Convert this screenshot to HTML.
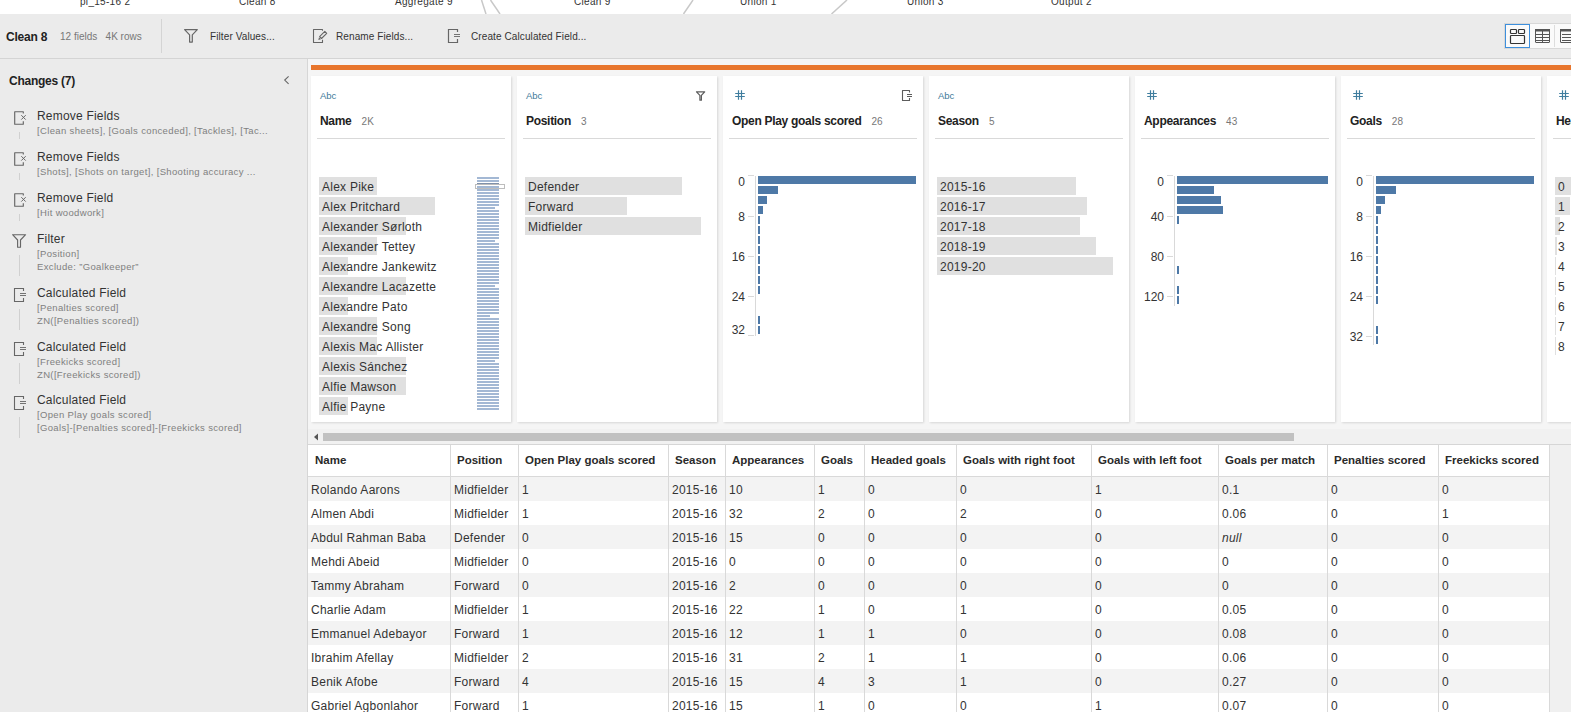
<!DOCTYPE html>
<html><head><meta charset="utf-8">
<style>
*{box-sizing:border-box;margin:0;padding:0}
html,body{width:1571px;height:712px;overflow:hidden;background:#f5f5f5;font-family:"Liberation Sans",sans-serif;color:#333}
.abs{position:absolute}
.t{position:absolute;white-space:nowrap;line-height:1}
#top{left:0;top:0;width:1571px;height:14px;background:#fff;overflow:hidden}
#top .t{font-size:10px;letter-spacing:0.3px;color:#333;top:-3px}
#tb{left:0;top:14px;width:1571px;height:45px;background:#ebebeb;border-bottom:1px solid #d4d4d4}
#left{left:0;top:59px;width:308px;height:653px;background:#ebebeb;border-right:1px solid #d6d6d6}
#right{left:308px;top:59px;width:1263px;height:653px;background:#f5f5f5}
#orange{left:311px;top:65px;width:1260px;height:5px;background:#e8762d}
.card{position:absolute;top:76px;width:200px;height:346px;background:#fff;box-shadow:1px 1px 2px rgba(0,0,0,.12)}
.card .typ{position:absolute;left:9px;top:14.5px;font-size:9.5px;color:#3f7a9a;line-height:1}
.card .nm{position:absolute;left:9px;top:39px;font-size:12px;letter-spacing:-0.3px;font-weight:bold;color:#222;line-height:1;white-space:nowrap}
.card .nm span{font-weight:normal;font-size:10px;letter-spacing:0.1px;color:#777;margin-left:10px}
.card .hl{position:absolute;left:6px;top:62px;width:188px;height:1px;background:#d9d9d9}
.bar{position:absolute;height:18px;background:#e0e0e0}
.bt{position:absolute;font-size:12px;letter-spacing:0.25px;color:#333;line-height:1;white-space:nowrap}
.hb{position:absolute;height:8px;background:#4e79a7}
.ax{position:absolute;width:1px;background:#d9d9d9}
.tk{position:absolute;width:6px;height:1px;background:#d9d9d9}
.al{position:absolute;font-size:12px;color:#333;line-height:1;text-align:right;width:30px}
.ch .ti{position:absolute;left:37px;font-size:12px;letter-spacing:0.2px;color:#333;line-height:1;white-space:nowrap}
.ch .su{position:absolute;left:37px;font-size:9.5px;letter-spacing:0.35px;color:#808080;line-height:1;white-space:nowrap}
#tbl{left:308px;top:445px;width:1263px;height:267px;background:#f0f0f0}
table{border-collapse:collapse;position:absolute;left:0;top:0;table-layout:fixed}
th{height:32px;background:#fff;font-size:11.5px;font-weight:bold;text-align:left;padding:0 0 0 6px;border:1px solid #d9d9d9;color:#222;white-space:nowrap}
td{height:24px;font-size:12px;padding:0 0 0 3px;border-left:1px solid #d9d9d9;border-right:1px solid #d9d9d9;color:#333;white-space:nowrap}
tr.g td{background:#f3f3f3}
tr.w td{background:#fff}
.th{position:absolute;top:455px;font-size:11.5px;font-weight:bold;color:#2a2a2a;line-height:1;white-space:nowrap}
.td{position:absolute;font-size:12px;letter-spacing:0.25px;color:#333;line-height:1;white-space:nowrap}
</style></head><body>
<div id="top" class="abs">
  <span class="t" style="left:80px">pl_15-16 2</span>
  <span class="t" style="left:239px">Clean 8</span>
  <span class="t" style="left:395px">Aggregate 9</span>
  <span class="t" style="left:574px">Clean 9</span>
  <span class="t" style="left:740px">Union 1</span>
  <span class="t" style="left:907px">Union 3</span>
  <span class="t" style="left:1051px">Output 2</span>
  <svg class="abs" style="left:0;top:0" width="1571" height="14"><g stroke="#c8c8c8" stroke-width="1.5" fill="none">
    <line x1="481.5" y1="0" x2="486" y2="14"/><line x1="490.5" y1="0" x2="500" y2="14"/>
    <line x1="693" y1="0" x2="683.5" y2="14"/><line x1="847" y1="0" x2="831.5" y2="14"/></g></svg>
</div>
<div id="tb" class="abs">
  <span class="t" style="left:6px;top:17px;font-size:12px;letter-spacing:-0.2px;font-weight:bold;color:#222">Clean 8</span>
  <span class="t" style="left:60px;top:18px;font-size:10px;color:#777">12 fields&nbsp;&nbsp; 4K rows</span>
  <div class="abs" style="left:161px;top:5px;width:1px;height:34px;background:#d4d4d4"></div>
  <svg class="abs" style="left:183px;top:14px" width="17" height="16" viewBox="0 0 17 16"><path d="M1.6 1.7 H14.3 L9.3 6.8 V14.1 H6.6 V6.8 Z" fill="none" stroke="#666" stroke-width="1.2" stroke-linejoin="round"/></svg>
  <span class="t" style="left:210px;top:18px;font-size:10px;letter-spacing:0.1px;color:#333">Filter Values...</span>
  <svg class="abs" style="left:312px;top:14px" width="17" height="16" viewBox="0 0 17 16"><path d="M10.5 2.8 V1.5 H1.5 V14.5 H10.5 V11.8" fill="none" stroke="#666" stroke-width="1.1" stroke-linejoin="round"/><path d="M7.6 8.6 L12.8 3.4 L14.7 5.3 L9.5 10.5 Z" fill="none" stroke="#666" stroke-width="1.1" stroke-linejoin="round"/><path d="M6.3 12 L7 9.3 L9 11.3 Z" fill="#666"/></svg>
  <span class="t" style="left:336px;top:18px;font-size:10px;letter-spacing:0.1px;color:#333">Rename Fields...</span>
  <svg class="abs" style="left:447px;top:14px" width="16" height="16" viewBox="0 0 16 16"><path d="M10.5 4 V1.5 H1.5 V14.5 H10.5 V11" fill="none" stroke="#666" stroke-width="1.2"/><path d="M7 6.5 H13 M7 8.5 H13" stroke="#666" stroke-width="0.9"/></svg>
  <span class="t" style="left:471px;top:18px;font-size:10px;letter-spacing:0.1px;color:#333">Create Calculated Field...</span>
  <div class="abs" style="left:1504px;top:9px;width:70px;height:26px;background:#fafafa;border:1px solid #d8d8d8"></div>
  <div class="abs" style="left:1505px;top:10px;width:25px;height:24px;border:1.5px solid #3d8fdc;background:#fafafa"></div>
  <svg class="abs" style="left:1505px;top:10px" width="66" height="24" viewBox="0 0 66 24">
    <g fill="none" stroke="#333" stroke-width="1.2">
      <rect x="5.5" y="5.5" width="6" height="4" rx="0.8"/><rect x="13.5" y="5.5" width="6" height="4" rx="0.8"/><rect x="5.5" y="11.5" width="14" height="8" rx="0.8"/>
    </g>
    <g fill="none" stroke="#555" stroke-width="1">
      <rect x="30.5" y="5.5" width="14" height="13" rx="0.5"/><path d="M37.5 6 V18.5 M31 10.5 H44 M31 13.5 H44 M31 16.5 H44"/>
    </g>
    <rect x="30" y="5" width="15" height="2.5" fill="#555"/>
    <line x1="49.5" y1="1" x2="49.5" y2="23" stroke="#ddd"/>
    <g fill="none" stroke="#555" stroke-width="1"><rect x="55.5" y="5.5" width="14" height="13" rx="0.5"/><path d="M57 10.5 H70 M57 13.5 H70 M57 16.5 H70"/></g>
    <rect x="55" y="5" width="15" height="2.5" fill="#555"/>
  </svg>
</div>
<div id="left" class="abs"></div>
<div class="ch">
<span class="t" style="left:9px;top:75px;font-size:12px;letter-spacing:-0.25px;font-weight:bold;color:#222">Changes (7)</span>
<svg class="abs" style="left:282px;top:74px" width="10" height="12" viewBox="0 0 10 12"><path d="M6.6 2.3 L2.7 6.1 L6.6 9.9" fill="none" stroke="#666" stroke-width="1.1"/></svg>
<svg class="abs" style="left:13px;top:110px" width="16" height="16" viewBox="0 0 16 16"><path d="M10.3 3.5 V1.7 H1.7 V14.2 H10.3 V11.2" fill="none" stroke="#666" stroke-width="1.15" stroke-linejoin="round"/><path d="M8.3 5.2 L12.7 9.6 M12.7 5.2 L8.3 9.6" stroke="#666" stroke-width="1"/></svg>
<span class="ti" style="top:110px">Remove Fields</span>
<span class="su" style="top:126px">[Clean sheets], [Goals conceded], [Tackles], [Tac...</span>
<div class="abs" style="left:19px;top:132px;width:1px;height:7px;background:#d0d0d0"></div>
<svg class="abs" style="left:13px;top:151px" width="16" height="16" viewBox="0 0 16 16"><path d="M10.3 3.5 V1.7 H1.7 V14.2 H10.3 V11.2" fill="none" stroke="#666" stroke-width="1.15" stroke-linejoin="round"/><path d="M8.3 5.2 L12.7 9.6 M12.7 5.2 L8.3 9.6" stroke="#666" stroke-width="1"/></svg>
<span class="ti" style="top:151px">Remove Fields</span>
<span class="su" style="top:167px">[Shots], [Shots on target], [Shooting accuracy ...</span>
<div class="abs" style="left:19px;top:173px;width:1px;height:7px;background:#d0d0d0"></div>
<svg class="abs" style="left:13px;top:192px" width="16" height="16" viewBox="0 0 16 16"><path d="M10.3 3.5 V1.7 H1.7 V14.2 H10.3 V11.2" fill="none" stroke="#666" stroke-width="1.15" stroke-linejoin="round"/><path d="M8.3 5.2 L12.7 9.6 M12.7 5.2 L8.3 9.6" stroke="#666" stroke-width="1"/></svg>
<span class="ti" style="top:192px">Remove Field</span>
<span class="su" style="top:208px">[Hit woodwork]</span>
<div class="abs" style="left:19px;top:214px;width:1px;height:7px;background:#d0d0d0"></div>
<svg class="abs" style="left:11px;top:233px" width="17" height="16" viewBox="0 0 17 16"><path d="M1.6 1.7 H14.6 L9.5 7 V14.2 H6.6 V7 Z" fill="none" stroke="#666" stroke-width="1.15" stroke-linejoin="round"/></svg>
<span class="ti" style="top:233px">Filter</span>
<span class="su" style="top:249px">[Position]</span>
<span class="su" style="top:262px">Exclude: ”Goalkeeper”</span>
<div class="abs" style="left:19px;top:255px;width:1px;height:21px;background:#d0d0d0"></div>
<svg class="abs" style="left:13px;top:287px" width="16" height="16" viewBox="0 0 16 16"><path d="M10.5 4 V1.5 H1.5 V14.5 H10.5 V11" fill="none" stroke="#666" stroke-width="1.1"/><path d="M7 6.5 H13 M7 8.5 H13" stroke="#666" stroke-width="0.9"/></svg>
<span class="ti" style="top:287px">Calculated Field</span>
<span class="su" style="top:303px">[Penalties scored]</span>
<span class="su" style="top:316px">ZN([Penalties scored])</span>
<div class="abs" style="left:19px;top:309px;width:1px;height:21px;background:#d0d0d0"></div>
<svg class="abs" style="left:13px;top:341px" width="16" height="16" viewBox="0 0 16 16"><path d="M10.5 4 V1.5 H1.5 V14.5 H10.5 V11" fill="none" stroke="#666" stroke-width="1.1"/><path d="M7 6.5 H13 M7 8.5 H13" stroke="#666" stroke-width="0.9"/></svg>
<span class="ti" style="top:341px">Calculated Field</span>
<span class="su" style="top:357px">[Freekicks scored]</span>
<span class="su" style="top:370px">ZN([Freekicks scored])</span>
<div class="abs" style="left:19px;top:363px;width:1px;height:21px;background:#d0d0d0"></div>
<svg class="abs" style="left:13px;top:395px" width="16" height="16" viewBox="0 0 16 16"><path d="M10.5 4 V1.5 H1.5 V14.5 H10.5 V11" fill="none" stroke="#666" stroke-width="1.1"/><path d="M7 6.5 H13 M7 8.5 H13" stroke="#666" stroke-width="0.9"/></svg>
<span class="ti" style="top:394px">Calculated Field</span>
<span class="su" style="top:410px">[Open Play goals scored]</span>
<span class="su" style="top:423px">[Goals]-[Penalties scored]-[Freekicks scored]</span>
<div class="abs" style="left:19px;top:417px;width:1px;height:21px;background:#d0d0d0"></div>
</div>
<div id="right" class="abs"></div>
<div id="orange" class="abs"></div>
<!--CARDS-->
<div class="card" style="left:311px">
<span class="typ">Abc</span>
<span class="nm">Name<span>2K</span></span>
<div class="hl"></div>

</div>
<div class="card" style="left:517px">
<span class="typ">Abc</span>
<span class="nm">Position<span>3</span></span>
<div class="hl"></div>
<svg class="abs" style="left:178px;top:14px" width="12" height="12" viewBox="0 0 12 12"><path d="M1.5 1.8 H9.7 L6.4 5.4 V10.2 H4.9 V5.4 Z" fill="none" stroke="#5c5c5c" stroke-width="1.2" stroke-linejoin="round"/></svg>
</div>
<div class="card" style="left:723px">
<svg class="abs" style="left:11px;top:13px" width="12" height="12" viewBox="0 0 12 12"><path d="M4.5 1.2 V10.8 M7.5 1.2 V10.8 M1.2 4.5 H10.8 M1.2 7.5 H10.8" stroke="#3f7d9e" stroke-width="1.2"/></svg>
<span class="nm">Open Play goals scored<span>26</span></span>
<div class="hl"></div>
<svg class="abs" style="left:178px;top:13px" width="13" height="13" viewBox="0 0 13 13"><path d="M8.5 3.6 V1.5 H1.5 V11.5 H8.5 V9.1" fill="none" stroke="#5c5c5c" stroke-width="1.1" stroke-linejoin="round"/><path d="M6 5.5 H11 M6 7.5 H11" stroke="#5c5c5c" stroke-width="1"/></svg>
</div>
<div class="card" style="left:929px">
<span class="typ">Abc</span>
<span class="nm">Season<span>5</span></span>
<div class="hl"></div>

</div>
<div class="card" style="left:1135px">
<svg class="abs" style="left:11px;top:13px" width="12" height="12" viewBox="0 0 12 12"><path d="M4.5 1.2 V10.8 M7.5 1.2 V10.8 M1.2 4.5 H10.8 M1.2 7.5 H10.8" stroke="#3f7d9e" stroke-width="1.2"/></svg>
<span class="nm">Appearances<span>43</span></span>
<div class="hl"></div>

</div>
<div class="card" style="left:1341px">
<svg class="abs" style="left:11px;top:13px" width="12" height="12" viewBox="0 0 12 12"><path d="M4.5 1.2 V10.8 M7.5 1.2 V10.8 M1.2 4.5 H10.8 M1.2 7.5 H10.8" stroke="#3f7d9e" stroke-width="1.2"/></svg>
<span class="nm">Goals<span>28</span></span>
<div class="hl"></div>

</div>
<div class="card" style="left:1547px">
<svg class="abs" style="left:11px;top:13px" width="12" height="12" viewBox="0 0 12 12"><path d="M4.5 1.2 V10.8 M7.5 1.2 V10.8 M1.2 4.5 H10.8 M1.2 7.5 H10.8" stroke="#3f7d9e" stroke-width="1.2"/></svg>
<span class="nm">Headed goals<span></span></span>
<div class="hl"></div>

</div>
<div class="bar" style="left:319px;top:177px;width:58px"></div>
<span class="bt" style="left:322px;top:181px">Alex Pike</span>
<div class="bar" style="left:319px;top:197px;width:116px"></div>
<span class="bt" style="left:322px;top:201px">Alex Pritchard</span>
<div class="bar" style="left:319px;top:217px;width:87px"></div>
<span class="bt" style="left:322px;top:221px">Alexander Sørloth</span>
<div class="bar" style="left:319px;top:237px;width:58px"></div>
<span class="bt" style="left:322px;top:241px">Alexander Tettey</span>
<div class="bar" style="left:319px;top:257px;width:29px"></div>
<span class="bt" style="left:322px;top:261px">Alexandre Jankewitz</span>
<div class="bar" style="left:319px;top:277px;width:87px"></div>
<span class="bt" style="left:322px;top:281px">Alexandre Lacazette</span>
<div class="bar" style="left:319px;top:297px;width:29px"></div>
<span class="bt" style="left:322px;top:301px">Alexandre Pato</span>
<div class="bar" style="left:319px;top:317px;width:58px"></div>
<span class="bt" style="left:322px;top:321px">Alexandre Song</span>
<div class="bar" style="left:319px;top:337px;width:58px"></div>
<span class="bt" style="left:322px;top:341px">Alexis Mac Allister</span>
<div class="bar" style="left:319px;top:357px;width:87px"></div>
<span class="bt" style="left:322px;top:361px">Alexis Sánchez</span>
<div class="bar" style="left:319px;top:377px;width:87px"></div>
<span class="bt" style="left:322px;top:381px">Alfie Mawson</span>
<div class="bar" style="left:319px;top:397px;width:29px"></div>
<span class="bt" style="left:322px;top:401px">Alfie Payne</span>
<div class="bar" style="left:525px;top:177px;width:157px"></div>
<span class="bt" style="left:528px;top:181px">Defender</span>
<div class="bar" style="left:525px;top:197px;width:102px"></div>
<span class="bt" style="left:528px;top:201px">Forward</span>
<div class="bar" style="left:525px;top:217px;width:176px"></div>
<span class="bt" style="left:528px;top:221px">Midfielder</span>
<div class="bar" style="left:937px;top:177px;width:139px"></div>
<span class="bt" style="left:940px;top:181px">2015-16</span>
<div class="bar" style="left:937px;top:197px;width:150px"></div>
<span class="bt" style="left:940px;top:201px">2016-17</span>
<div class="bar" style="left:937px;top:217px;width:143px"></div>
<span class="bt" style="left:940px;top:221px">2017-18</span>
<div class="bar" style="left:937px;top:237px;width:159px"></div>
<span class="bt" style="left:940px;top:241px">2018-19</span>
<div class="bar" style="left:937px;top:257px;width:176px"></div>
<span class="bt" style="left:940px;top:261px">2019-20</span>
<div class="bar" style="left:1555px;top:177px;width:40px"></div>
<span class="bt" style="left:1558px;top:181px">0</span>
<div class="bar" style="left:1555px;top:197px;width:15px"></div>
<span class="bt" style="left:1558px;top:201px">1</span>
<div class="bar" style="left:1555px;top:217px;width:5px"></div>
<span class="bt" style="left:1558px;top:221px">2</span>
<div class="bar" style="left:1555px;top:237px;width:2px"></div>
<span class="bt" style="left:1558px;top:241px">3</span>
<div class="bar" style="left:1555px;top:257px;width:1px"></div>
<span class="bt" style="left:1558px;top:261px">4</span>
<div class="bar" style="left:1555px;top:277px;width:1px"></div>
<span class="bt" style="left:1558px;top:281px">5</span>
<div class="bar" style="left:1555px;top:297px;width:1px"></div>
<span class="bt" style="left:1558px;top:301px">6</span>
<div class="bar" style="left:1555px;top:317px;width:1px"></div>
<span class="bt" style="left:1558px;top:321px">7</span>
<div class="bar" style="left:1555px;top:337px;width:1px"></div>
<span class="bt" style="left:1558px;top:341px">8</span>
<svg class="abs" style="left:477px;top:177px" width="22" height="234"><rect x="0" y="0" width="22" height="2" fill="#a3b8d4"/><rect x="0" y="3" width="22" height="2" fill="#a3b8d4"/><rect x="0" y="6" width="22" height="2" fill="#7f91ab"/><rect x="0" y="9" width="22" height="2" fill="#a3b8d4"/><rect x="0" y="12" width="22" height="2" fill="#a3b8d4"/><rect x="0" y="15" width="22" height="2" fill="#a3b8d4"/><rect x="0" y="18" width="22" height="2" fill="#a3b8d4"/><rect x="0" y="21" width="22" height="2" fill="#a3b8d4"/><rect x="0" y="24" width="22" height="2" fill="#a3b8d4"/><rect x="0" y="27" width="22" height="2" fill="#a3b8d4"/><rect x="0" y="30" width="18" height="2" fill="#a3b8d4"/><rect x="0" y="33" width="22" height="2" fill="#a3b8d4"/><rect x="0" y="36" width="22" height="2" fill="#a3b8d4"/><rect x="0" y="39" width="22" height="2" fill="#a3b8d4"/><rect x="0" y="42" width="22" height="2" fill="#a3b8d4"/><rect x="0" y="45" width="22" height="2" fill="#a3b8d4"/><rect x="0" y="48" width="22" height="2" fill="#a3b8d4"/><rect x="0" y="51" width="22" height="2" fill="#a3b8d4"/><rect x="0" y="54" width="22" height="2" fill="#a3b8d4"/><rect x="0" y="57" width="22" height="2" fill="#a3b8d4"/><rect x="0" y="60" width="22" height="2" fill="#a3b8d4"/><rect x="0" y="63" width="18" height="2" fill="#a3b8d4"/><rect x="0" y="66" width="22" height="2" fill="#a3b8d4"/><rect x="0" y="69" width="22" height="2" fill="#a3b8d4"/><rect x="0" y="72" width="22" height="2" fill="#a3b8d4"/><rect x="0" y="75" width="22" height="2" fill="#a3b8d4"/><rect x="0" y="78" width="22" height="2" fill="#a3b8d4"/><rect x="0" y="81" width="22" height="2" fill="#a3b8d4"/><rect x="0" y="84" width="22" height="2" fill="#a3b8d4"/><rect x="0" y="87" width="22" height="2" fill="#a3b8d4"/><rect x="0" y="90" width="22" height="2" fill="#a3b8d4"/><rect x="0" y="93" width="22" height="2" fill="#a3b8d4"/><rect x="0" y="96" width="22" height="2" fill="#a3b8d4"/><rect x="0" y="99" width="22" height="2" fill="#a3b8d4"/><rect x="0" y="102" width="22" height="2" fill="#a3b8d4"/><rect x="0" y="105" width="22" height="2" fill="#a3b8d4"/><rect x="0" y="108" width="18" height="2" fill="#a3b8d4"/><rect x="0" y="111" width="22" height="2" fill="#a3b8d4"/><rect x="0" y="114" width="22" height="2" fill="#a3b8d4"/><rect x="0" y="117" width="22" height="2" fill="#a3b8d4"/><rect x="0" y="120" width="22" height="2" fill="#a3b8d4"/><rect x="0" y="123" width="22" height="2" fill="#a3b8d4"/><rect x="0" y="126" width="22" height="2" fill="#a3b8d4"/><rect x="0" y="129" width="22" height="2" fill="#a3b8d4"/><rect x="0" y="132" width="22" height="2" fill="#a3b8d4"/><rect x="0" y="135" width="22" height="2" fill="#a3b8d4"/><rect x="0" y="138" width="13" height="2" fill="#a3b8d4"/><rect x="0" y="141" width="22" height="2" fill="#a3b8d4"/><rect x="0" y="144" width="22" height="2" fill="#a3b8d4"/><rect x="0" y="147" width="22" height="2" fill="#a3b8d4"/><rect x="0" y="150" width="22" height="2" fill="#a3b8d4"/><rect x="0" y="153" width="22" height="2" fill="#a3b8d4"/><rect x="0" y="156" width="22" height="2" fill="#a3b8d4"/><rect x="0" y="159" width="22" height="2" fill="#a3b8d4"/><rect x="0" y="162" width="22" height="2" fill="#a3b8d4"/><rect x="0" y="165" width="22" height="2" fill="#a3b8d4"/><rect x="0" y="168" width="22" height="2" fill="#a3b8d4"/><rect x="0" y="171" width="22" height="2" fill="#a3b8d4"/><rect x="0" y="174" width="22" height="2" fill="#a3b8d4"/><rect x="0" y="177" width="22" height="2" fill="#a3b8d4"/><rect x="0" y="180" width="22" height="2" fill="#a3b8d4"/><rect x="0" y="183" width="18" height="2" fill="#a3b8d4"/><rect x="0" y="186" width="22" height="2" fill="#a3b8d4"/><rect x="0" y="189" width="22" height="2" fill="#a3b8d4"/><rect x="0" y="192" width="22" height="2" fill="#a3b8d4"/><rect x="0" y="195" width="22" height="2" fill="#a3b8d4"/><rect x="0" y="198" width="22" height="2" fill="#a3b8d4"/><rect x="0" y="201" width="22" height="2" fill="#a3b8d4"/><rect x="0" y="204" width="22" height="2" fill="#a3b8d4"/><rect x="0" y="207" width="22" height="2" fill="#a3b8d4"/><rect x="0" y="210" width="22" height="2" fill="#a3b8d4"/><rect x="0" y="213" width="22" height="2" fill="#a3b8d4"/><rect x="0" y="216" width="22" height="2" fill="#a3b8d4"/><rect x="0" y="219" width="22" height="2" fill="#a3b8d4"/><rect x="0" y="222" width="22" height="2" fill="#a3b8d4"/><rect x="0" y="225" width="22" height="2" fill="#a3b8d4"/><rect x="0" y="228" width="22" height="2" fill="#a3b8d4"/><rect x="0" y="231" width="22" height="2" fill="#a3b8d4"/></svg>
<div class="abs" style="left:475px;top:184px;width:30px;height:5px;border:1px solid #bdbdbd"></div>
<div class="ax" style="left:755px;top:176px;height:160px"></div>
<div class="tk" style="left:748px;top:175px"></div>
<span class="al" style="left:715px;top:176px">0</span>
<div class="tk" style="left:748px;top:216px"></div>
<span class="al" style="left:715px;top:211px">8</span>
<div class="tk" style="left:748px;top:256px"></div>
<span class="al" style="left:715px;top:251px">16</span>
<div class="tk" style="left:748px;top:296px"></div>
<span class="al" style="left:715px;top:291px">24</span>
<div class="tk" style="left:748px;top:335px"></div>
<span class="al" style="left:715px;top:324px">32</span>
<div class="hb" style="left:758px;top:176px;width:158px"></div>
<div class="hb" style="left:758px;top:186px;width:20px"></div>
<div class="hb" style="left:758px;top:196px;width:9px"></div>
<div class="hb" style="left:758px;top:206px;width:5px"></div>
<div class="hb" style="left:758px;top:216px;width:2px"></div>
<div class="hb" style="left:758px;top:226px;width:2px"></div>
<div class="hb" style="left:758px;top:236px;width:2px"></div>
<div class="hb" style="left:758px;top:246px;width:2px"></div>
<div class="hb" style="left:758px;top:256px;width:2px"></div>
<div class="hb" style="left:758px;top:266px;width:2px"></div>
<div class="hb" style="left:758px;top:276px;width:2px"></div>
<div class="hb" style="left:758px;top:286px;width:2px"></div>
<div class="hb" style="left:758px;top:316px;width:2px"></div>
<div class="hb" style="left:758px;top:326px;width:2px"></div>
<div class="ax" style="left:1174px;top:176px;height:130px"></div>
<div class="tk" style="left:1167px;top:175px"></div>
<span class="al" style="left:1134px;top:176px">0</span>
<div class="tk" style="left:1167px;top:216px"></div>
<span class="al" style="left:1134px;top:211px">40</span>
<div class="tk" style="left:1167px;top:256px"></div>
<span class="al" style="left:1134px;top:251px">80</span>
<div class="tk" style="left:1167px;top:296px"></div>
<span class="al" style="left:1134px;top:291px">120</span>
<div class="hb" style="left:1177px;top:176px;width:151px"></div>
<div class="hb" style="left:1177px;top:186px;width:37px"></div>
<div class="hb" style="left:1177px;top:196px;width:44px"></div>
<div class="hb" style="left:1177px;top:206px;width:46px"></div>
<div class="hb" style="left:1177px;top:216px;width:2px"></div>
<div class="hb" style="left:1177px;top:266px;width:2px"></div>
<div class="hb" style="left:1177px;top:286px;width:2px"></div>
<div class="hb" style="left:1177px;top:296px;width:2px"></div>
<div class="ax" style="left:1373px;top:176px;height:169px"></div>
<div class="tk" style="left:1366px;top:175px"></div>
<span class="al" style="left:1333px;top:176px">0</span>
<div class="tk" style="left:1366px;top:216px"></div>
<span class="al" style="left:1333px;top:211px">8</span>
<div class="tk" style="left:1366px;top:256px"></div>
<span class="al" style="left:1333px;top:251px">16</span>
<div class="tk" style="left:1366px;top:296px"></div>
<span class="al" style="left:1333px;top:291px">24</span>
<div class="tk" style="left:1366px;top:336px"></div>
<span class="al" style="left:1333px;top:331px">32</span>
<div class="hb" style="left:1376px;top:176px;width:158px"></div>
<div class="hb" style="left:1376px;top:186px;width:20px"></div>
<div class="hb" style="left:1376px;top:196px;width:9px"></div>
<div class="hb" style="left:1376px;top:206px;width:5px"></div>
<div class="hb" style="left:1376px;top:216px;width:2px"></div>
<div class="hb" style="left:1376px;top:226px;width:2px"></div>
<div class="hb" style="left:1376px;top:236px;width:2px"></div>
<div class="hb" style="left:1376px;top:246px;width:2px"></div>
<div class="hb" style="left:1376px;top:256px;width:2px"></div>
<div class="hb" style="left:1376px;top:266px;width:2px"></div>
<div class="hb" style="left:1376px;top:276px;width:2px"></div>
<div class="hb" style="left:1376px;top:286px;width:2px"></div>
<div class="hb" style="left:1376px;top:296px;width:2px"></div>
<div class="hb" style="left:1376px;top:326px;width:2px"></div>
<div class="hb" style="left:1376px;top:336px;width:2px"></div>
<!--/CARDS-->
<!--TABLE-->
<div class="abs" style="left:308px;top:429px;width:1263px;height:15px;background:#f1f1f1"></div>
<svg class="abs" style="left:313px;top:433px" width="6" height="8" viewBox="0 0 6 8"><path d="M5 0.5 L1 4 L5 7.5 Z" fill="#555"/></svg>
<div class="abs" style="left:323px;top:433px;width:971px;height:8px;background:#c1c1c1"></div>
<div class="abs" style="left:308px;top:444px;width:1263px;height:1px;background:#d6d6d6"></div>
<div class="abs" style="left:308px;top:445px;width:1241px;height:31px;background:#fff"></div>
<div class="abs" style="left:1549px;top:445px;width:22px;height:267px;background:#f0f0f0"></div>
<div class="abs" style="left:308px;top:476px;width:1241px;height:1px;background:#d9d9d9"></div>
<div class="abs" style="left:308px;top:477px;width:1241px;height:24px;background:#f3f3f3"></div>
<div class="abs" style="left:308px;top:501px;width:1241px;height:24px;background:#fff"></div>
<div class="abs" style="left:308px;top:525px;width:1241px;height:24px;background:#f3f3f3"></div>
<div class="abs" style="left:308px;top:549px;width:1241px;height:24px;background:#fff"></div>
<div class="abs" style="left:308px;top:573px;width:1241px;height:24px;background:#f3f3f3"></div>
<div class="abs" style="left:308px;top:597px;width:1241px;height:24px;background:#fff"></div>
<div class="abs" style="left:308px;top:621px;width:1241px;height:24px;background:#f3f3f3"></div>
<div class="abs" style="left:308px;top:645px;width:1241px;height:24px;background:#fff"></div>
<div class="abs" style="left:308px;top:669px;width:1241px;height:24px;background:#f3f3f3"></div>
<div class="abs" style="left:308px;top:693px;width:1241px;height:24px;background:#fff"></div>
<div class="abs" style="left:450px;top:445px;width:1px;height:267px;background:#d9d9d9"></div>
<div class="abs" style="left:518px;top:445px;width:1px;height:267px;background:#d9d9d9"></div>
<div class="abs" style="left:668px;top:445px;width:1px;height:267px;background:#d9d9d9"></div>
<div class="abs" style="left:725px;top:445px;width:1px;height:267px;background:#d9d9d9"></div>
<div class="abs" style="left:814px;top:445px;width:1px;height:267px;background:#d9d9d9"></div>
<div class="abs" style="left:864px;top:445px;width:1px;height:267px;background:#d9d9d9"></div>
<div class="abs" style="left:956px;top:445px;width:1px;height:267px;background:#d9d9d9"></div>
<div class="abs" style="left:1091px;top:445px;width:1px;height:267px;background:#d9d9d9"></div>
<div class="abs" style="left:1218px;top:445px;width:1px;height:267px;background:#d9d9d9"></div>
<div class="abs" style="left:1327px;top:445px;width:1px;height:267px;background:#d9d9d9"></div>
<div class="abs" style="left:1438px;top:445px;width:1px;height:267px;background:#d9d9d9"></div>
<div class="abs" style="left:1549px;top:445px;width:1px;height:267px;background:#d9d9d9"></div>
<span class="th" style="left:315px">Name</span>
<span class="th" style="left:457px">Position</span>
<span class="th" style="left:525px">Open Play goals scored</span>
<span class="th" style="left:675px">Season</span>
<span class="th" style="left:732px">Appearances</span>
<span class="th" style="left:821px">Goals</span>
<span class="th" style="left:871px">Headed goals</span>
<span class="th" style="left:963px">Goals with right foot</span>
<span class="th" style="left:1098px">Goals with left foot</span>
<span class="th" style="left:1225px">Goals per match</span>
<span class="th" style="left:1334px">Penalties scored</span>
<span class="th" style="left:1445px">Freekicks scored</span>
<span class="td" style="left:311px;top:484px">Rolando Aarons</span>
<span class="td" style="left:454px;top:484px">Midfielder</span>
<span class="td" style="left:522px;top:484px">1</span>
<span class="td" style="left:672px;top:484px">2015-16</span>
<span class="td" style="left:729px;top:484px">10</span>
<span class="td" style="left:818px;top:484px">1</span>
<span class="td" style="left:868px;top:484px">0</span>
<span class="td" style="left:960px;top:484px">0</span>
<span class="td" style="left:1095px;top:484px">1</span>
<span class="td" style="left:1222px;top:484px">0.1</span>
<span class="td" style="left:1331px;top:484px">0</span>
<span class="td" style="left:1442px;top:484px">0</span>
<span class="td" style="left:311px;top:508px">Almen Abdi</span>
<span class="td" style="left:454px;top:508px">Midfielder</span>
<span class="td" style="left:522px;top:508px">1</span>
<span class="td" style="left:672px;top:508px">2015-16</span>
<span class="td" style="left:729px;top:508px">32</span>
<span class="td" style="left:818px;top:508px">2</span>
<span class="td" style="left:868px;top:508px">0</span>
<span class="td" style="left:960px;top:508px">2</span>
<span class="td" style="left:1095px;top:508px">0</span>
<span class="td" style="left:1222px;top:508px">0.06</span>
<span class="td" style="left:1331px;top:508px">0</span>
<span class="td" style="left:1442px;top:508px">1</span>
<span class="td" style="left:311px;top:532px">Abdul Rahman Baba</span>
<span class="td" style="left:454px;top:532px">Defender</span>
<span class="td" style="left:522px;top:532px">0</span>
<span class="td" style="left:672px;top:532px">2015-16</span>
<span class="td" style="left:729px;top:532px">15</span>
<span class="td" style="left:818px;top:532px">0</span>
<span class="td" style="left:868px;top:532px">0</span>
<span class="td" style="left:960px;top:532px">0</span>
<span class="td" style="left:1095px;top:532px">0</span>
<span class="td" style="left:1222px;top:532px;font-style:italic">null</span>
<span class="td" style="left:1331px;top:532px">0</span>
<span class="td" style="left:1442px;top:532px">0</span>
<span class="td" style="left:311px;top:556px">Mehdi Abeid</span>
<span class="td" style="left:454px;top:556px">Midfielder</span>
<span class="td" style="left:522px;top:556px">0</span>
<span class="td" style="left:672px;top:556px">2015-16</span>
<span class="td" style="left:729px;top:556px">0</span>
<span class="td" style="left:818px;top:556px">0</span>
<span class="td" style="left:868px;top:556px">0</span>
<span class="td" style="left:960px;top:556px">0</span>
<span class="td" style="left:1095px;top:556px">0</span>
<span class="td" style="left:1222px;top:556px">0</span>
<span class="td" style="left:1331px;top:556px">0</span>
<span class="td" style="left:1442px;top:556px">0</span>
<span class="td" style="left:311px;top:580px">Tammy Abraham</span>
<span class="td" style="left:454px;top:580px">Forward</span>
<span class="td" style="left:522px;top:580px">0</span>
<span class="td" style="left:672px;top:580px">2015-16</span>
<span class="td" style="left:729px;top:580px">2</span>
<span class="td" style="left:818px;top:580px">0</span>
<span class="td" style="left:868px;top:580px">0</span>
<span class="td" style="left:960px;top:580px">0</span>
<span class="td" style="left:1095px;top:580px">0</span>
<span class="td" style="left:1222px;top:580px">0</span>
<span class="td" style="left:1331px;top:580px">0</span>
<span class="td" style="left:1442px;top:580px">0</span>
<span class="td" style="left:311px;top:604px">Charlie Adam</span>
<span class="td" style="left:454px;top:604px">Midfielder</span>
<span class="td" style="left:522px;top:604px">1</span>
<span class="td" style="left:672px;top:604px">2015-16</span>
<span class="td" style="left:729px;top:604px">22</span>
<span class="td" style="left:818px;top:604px">1</span>
<span class="td" style="left:868px;top:604px">0</span>
<span class="td" style="left:960px;top:604px">1</span>
<span class="td" style="left:1095px;top:604px">0</span>
<span class="td" style="left:1222px;top:604px">0.05</span>
<span class="td" style="left:1331px;top:604px">0</span>
<span class="td" style="left:1442px;top:604px">0</span>
<span class="td" style="left:311px;top:628px">Emmanuel Adebayor</span>
<span class="td" style="left:454px;top:628px">Forward</span>
<span class="td" style="left:522px;top:628px">1</span>
<span class="td" style="left:672px;top:628px">2015-16</span>
<span class="td" style="left:729px;top:628px">12</span>
<span class="td" style="left:818px;top:628px">1</span>
<span class="td" style="left:868px;top:628px">1</span>
<span class="td" style="left:960px;top:628px">0</span>
<span class="td" style="left:1095px;top:628px">0</span>
<span class="td" style="left:1222px;top:628px">0.08</span>
<span class="td" style="left:1331px;top:628px">0</span>
<span class="td" style="left:1442px;top:628px">0</span>
<span class="td" style="left:311px;top:652px">Ibrahim Afellay</span>
<span class="td" style="left:454px;top:652px">Midfielder</span>
<span class="td" style="left:522px;top:652px">2</span>
<span class="td" style="left:672px;top:652px">2015-16</span>
<span class="td" style="left:729px;top:652px">31</span>
<span class="td" style="left:818px;top:652px">2</span>
<span class="td" style="left:868px;top:652px">1</span>
<span class="td" style="left:960px;top:652px">1</span>
<span class="td" style="left:1095px;top:652px">0</span>
<span class="td" style="left:1222px;top:652px">0.06</span>
<span class="td" style="left:1331px;top:652px">0</span>
<span class="td" style="left:1442px;top:652px">0</span>
<span class="td" style="left:311px;top:676px">Benik Afobe</span>
<span class="td" style="left:454px;top:676px">Forward</span>
<span class="td" style="left:522px;top:676px">4</span>
<span class="td" style="left:672px;top:676px">2015-16</span>
<span class="td" style="left:729px;top:676px">15</span>
<span class="td" style="left:818px;top:676px">4</span>
<span class="td" style="left:868px;top:676px">3</span>
<span class="td" style="left:960px;top:676px">1</span>
<span class="td" style="left:1095px;top:676px">0</span>
<span class="td" style="left:1222px;top:676px">0.27</span>
<span class="td" style="left:1331px;top:676px">0</span>
<span class="td" style="left:1442px;top:676px">0</span>
<span class="td" style="left:311px;top:700px">Gabriel Agbonlahor</span>
<span class="td" style="left:454px;top:700px">Forward</span>
<span class="td" style="left:522px;top:700px">1</span>
<span class="td" style="left:672px;top:700px">2015-16</span>
<span class="td" style="left:729px;top:700px">15</span>
<span class="td" style="left:818px;top:700px">1</span>
<span class="td" style="left:868px;top:700px">0</span>
<span class="td" style="left:960px;top:700px">0</span>
<span class="td" style="left:1095px;top:700px">1</span>
<span class="td" style="left:1222px;top:700px">0.07</span>
<span class="td" style="left:1331px;top:700px">0</span>
<span class="td" style="left:1442px;top:700px">0</span>
<!--/TABLE-->
</body></html>
